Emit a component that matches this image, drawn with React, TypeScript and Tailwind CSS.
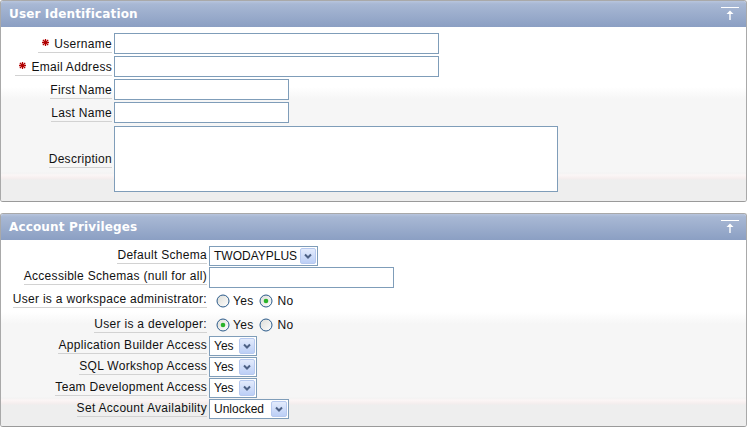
import React from 'react';

const BODY_BG =
  'bg-[linear-gradient(to_top,#eeeeee_0px,#eeeeee_21px,#f3eded_22px,#f8f1f1_24px,#fbf6f6_26px,#f3f3f3_28px,#f6f6f6_29px,#f6f6f6_102px,#ffffff_114px)]';

function Asterisk() {
  return (
    <svg width="7" height="7" viewBox="0 0 7 7" className="mr-[5px] mt-[2px] shrink-0">
      <g stroke="#b10000" strokeWidth="1.3" strokeLinecap="square">
        <line x1="3.5" y1="0.5" x2="3.5" y2="6.5" />
        <line x1="0.5" y1="3.5" x2="6.5" y2="3.5" />
        <line x1="1.3" y1="1.3" x2="5.7" y2="5.7" />
        <line x1="5.7" y1="1.3" x2="1.3" y2="5.7" />
      </g>
    </svg>
  );
}

function Label({ text, required }: { text: string; required?: boolean }) {
  return (
    <span
      className={`inline-flex items-start whitespace-nowrap border-b border-[#d2d2d2] leading-[15px] tracking-[0.3px] ${
        required ? 'pl-[4px]' : ''
      }`}
    >
      {required && <Asterisk />}
      {text}
    </span>
  );
}

function CollapseIcon() {
  return (
    <svg width="20" height="14" viewBox="0 0 20 14" className="mr-[6px]">
      <line x1="1" y1="0.5" x2="19" y2="0.5" stroke="#ffffff" strokeWidth="1" />
      <line x1="10" y1="5" x2="10" y2="13" stroke="#ffffff" strokeWidth="1.4" />
      <path d="M6.5 7 L10 3.5 L13.5 7 Z" fill="#ffffff" />
    </svg>
  );
}

function PanelHeader({ title }: { title: string }) {
  return (
    <div className="flex h-[26px] items-start justify-between bg-[linear-gradient(to_bottom,#b8c5dd_0px,#a8b8d4_3px,#8b9fc3_26px)]">
      <span className="pl-[8px] font-['DejaVu_Sans',Verdana,sans-serif] text-[12px] font-bold leading-[26px] tracking-[0.15px] text-white">
        {title}
      </span>
      <div className="pt-[6px]">
        <CollapseIcon />
      </div>
    </div>
  );
}

function Chevron() {
  return (
    <span className="flex h-[16px] w-[16px] shrink-0 items-center justify-center rounded-[2px] border border-[#b7c9ef] bg-[linear-gradient(to_bottom,#e3ebfc,#bccff6)]">
      <svg width="10" height="8" viewBox="0 0 10 8">
        <path d="M2 2.5 L5 5.5 L8 2.5" fill="none" stroke="#4d6185" strokeWidth="2" />
      </svg>
    </span>
  );
}

function FakeSelect({ value, className }: { value: string; className: string }) {
  return (
    <div
      className={`flex h-[20px] items-center justify-between border border-[#7f9db9] bg-white pl-[4px] pr-[1px] ${className}`}
    >
      <span className="leading-[18px]">{value}</span>
      <Chevron />
    </div>
  );
}

function Radio({ checked }: { checked?: boolean }) {
  return (
    <svg width="14" height="14" viewBox="0 0 14 14" className="shrink-0">
      <defs>
        <linearGradient id="rg" x1="0" y1="0" x2="1" y2="1">
          <stop offset="0" stopColor="#dcdcd6" />
          <stop offset="1" stopColor="#ffffff" />
        </linearGradient>
      </defs>
      <circle cx="7" cy="7" r="6" fill="url(#rg)" stroke="#2a5a8a" strokeWidth="1" />
      {checked && <circle cx="7" cy="7" r="2.3" fill="#2ab32a" />}
    </svg>
  );
}

function RadioPair({ yes }: { yes: boolean }) {
  return (
    <div className="flex items-center pl-[7px] pt-[5px] tracking-[0.3px]">
      <Radio checked={yes} />
      <span className="ml-[3px] leading-[14px]">Yes</span>
      <span className="ml-[6px]" />
      <Radio checked={!yes} />
      <span className="ml-[4px] leading-[14px]">No</span>
    </div>
  );
}

function TextInput({ className }: { className: string }) {
  return (
    <input
      type="text"
      readOnly
      className={`h-[21px] border border-[#7f9db9] bg-white outline-none ${className}`}
    />
  );
}

export default function App() {
  return (
    <div className="h-[428px] w-[748px] overflow-hidden bg-white font-['Liberation_Sans',Arial,sans-serif] text-[12px] text-[#111111]">
      {/* User Identification */}
      <section className="w-[747px] overflow-hidden rounded-[3px] border border-[#a9a9a9] border-b-[#9a9a9a]">
        <PanelHeader title="User Identification" />
        <div className={`h-[174px] pt-[6px] ${BODY_BG}`}>
          {[
            { label: 'Username', required: true, w: 'w-[325px]' },
            { label: 'Email Address', required: true, w: 'w-[325px]' },
            { label: 'First Name', required: false, w: 'w-[175px]' },
            { label: 'Last Name', required: false, w: 'w-[175px]' },
          ].map((r) => (
            <div key={r.label} className="flex h-[23px]">
              <div className="flex w-[111px] shrink-0 items-start justify-end pt-[4px]">
                <Label text={r.label} required={r.required} />
              </div>
              <div className="ml-[2px]">
                <TextInput className={r.w} />
              </div>
            </div>
          ))}
          <div className="mt-[1px] flex h-[66px]">
            <div className="flex w-[111px] shrink-0 items-start justify-end pt-[26px]">
              <Label text="Description" />
            </div>
            <textarea
              readOnly
              className="ml-[2px] h-[66px] w-[444px] resize-none border border-[#7f9db9] bg-white outline-none"
            />
          </div>
        </div>
      </section>

      {/* Account Privileges */}
      <section className="mt-[11px] w-[747px] overflow-hidden rounded-[3px] border border-[#a9a9a9] border-b-[#9a9a9a]">
        <PanelHeader title="Account Privileges" />
        <div className={`h-[186px] pt-[6px] ${BODY_BG}`}>
          <div className="flex h-[21px]">
            <div className="flex w-[206px] shrink-0 items-start justify-end pt-[2px]">
              <Label text="Default Schema" />
            </div>
            <div className="ml-[2px]">
              <FakeSelect value="TWODAYPLUS" className="w-[109px]" />
            </div>
          </div>
          <div className="flex h-[22px]">
            <div className="flex w-[206px] shrink-0 items-start justify-end pt-[2px]">
              <Label text="Accessible Schemas (null for all)" />
            </div>
            <div className="ml-[2px]">
              <TextInput className="w-[185px]" />
            </div>
          </div>
          <div className="flex h-[24px]">
            <div className="flex w-[206px] shrink-0 items-start justify-end pt-[3px]">
              <Label text="User is a workspace administrator:" />
            </div>
            <div className="ml-[2px]">
              <RadioPair yes={false} />
            </div>
          </div>
          <div className="flex h-[23px]">
            <div className="flex w-[206px] shrink-0 items-start justify-end pt-[4px]">
              <Label text="User is a developer:" />
            </div>
            <div className="ml-[2px]">
              <RadioPair yes={true} />
            </div>
          </div>
          {[
            { label: 'Application Builder Access', value: 'Yes', w: 'w-[48px]' },
            { label: 'SQL Workshop Access', value: 'Yes', w: 'w-[48px]' },
            { label: 'Team Development Access', value: 'Yes', w: 'w-[48px]' },
            { label: 'Set Account Availability', value: 'Unlocked', w: 'w-[80px]' },
          ].map((r) => (
            <div key={r.label} className="flex h-[21px]">
              <div className="flex w-[206px] shrink-0 items-start justify-end pt-[2px]">
                <Label text={r.label} />
              </div>
              <div className="ml-[2px]">
                <FakeSelect value={r.value} className={r.w} />
              </div>
            </div>
          ))}
        </div>
      </section>
    </div>
  );
}
